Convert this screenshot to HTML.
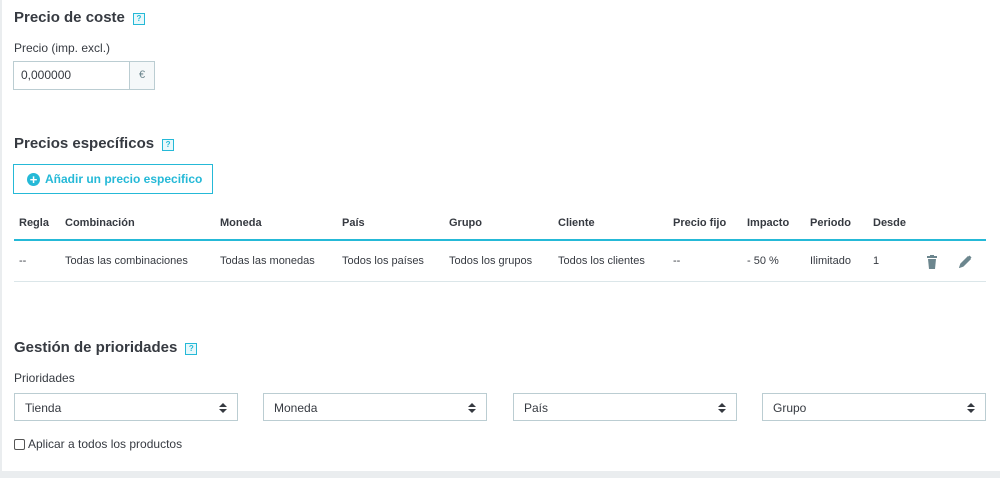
<!DOCTYPE html>
<html><head><style>
body{margin:0;width:1000px;height:478px;background:#fff;font-family:"Liberation Sans",sans-serif;color:#363a41;position:relative;overflow:hidden}
.a{position:absolute;white-space:nowrap}
h{position:absolute;font-size:15px;font-weight:bold;color:#363a41}
.q{display:inline-block;width:10px;height:10px;border:1.5px solid #25b9d7;font-size:8px;color:#25b9d7;text-align:center;line-height:10px;vertical-align:1px;margin-left:8px;background:#e8f8fb;font-weight:bold}
.l{font-size:12px;color:#363a41}
.th{position:absolute;top:217px;font-size:11px;font-weight:bold}
.td{position:absolute;top:255px;font-size:11px}
.sel{position:absolute;top:393px;width:224px;height:28px;border:1px solid #bbcdd2;font-size:12px;line-height:28px;box-sizing:border-box;padding-left:10px}
.sel:after{content:"";position:absolute;right:10px;top:9px;border-left:4px solid transparent;border-right:4px solid transparent;border-bottom:4px solid #363a41}
.sel:before{content:"";position:absolute;right:10px;top:15px;border-left:4px solid transparent;border-right:4px solid transparent;border-top:4px solid #363a41}
</style></head><body>
<div class="a" style="left:0;top:0;width:2px;height:478px;background:#eaedef"></div>
<div class="a" style="left:0;top:471px;width:1000px;height:7px;background:#eaedef"></div>
<h style="left:14px;top:9px">Precio de coste<span class="q">?</span></h>
<div class="a l" style="left:14px;top:41px">Precio (imp. excl.)</div>
<div class="a" style="left:13px;top:61px;width:142px;height:29px;border:1px solid #bbcdd2;box-sizing:border-box"></div>
<div class="a" style="left:129px;top:62px;width:24px;height:27px;background:#f5f8f9;border-left:1px solid #bbcdd2;font-size:11px;color:#6c868e;text-align:center;line-height:27px">€</div>
<div class="a l" style="left:21px;top:68px">0,000000</div>
<h style="left:14px;top:135px">Precios específicos<span class="q">?</span></h>
<div class="a" style="left:13px;top:164px;width:200px;height:30px;border:1px solid #25b9d7;box-sizing:border-box"></div>
<div class="a" style="left:27px;top:173px;width:13px;height:13px;border-radius:50%;background:#25b9d7;color:#fff;font-size:13px;font-weight:bold;line-height:13px;text-align:center">+</div>
<div class="a" style="left:45px;top:172px;font-size:12px;font-weight:bold;color:#25b9d7">Añadir un precio especifico</div>
<div class="th" style="left:19px">Regla</div><div class="th" style="left:65px">Combinación</div><div class="th" style="left:220px">Moneda</div><div class="th" style="left:342px">País</div><div class="th" style="left:449px">Grupo</div><div class="th" style="left:558px">Cliente</div><div class="th" style="left:673px">Precio fijo</div><div class="th" style="left:747px">Impacto</div><div class="th" style="left:810px">Periodo</div><div class="th" style="left:873px">Desde</div>
<div class="a" style="left:14px;top:239px;width:972px;height:2px;background:#25b9d7"></div>
<div class="td" style="left:19px">--</div><div class="td" style="left:65px">Todas las combinaciones</div><div class="td" style="left:220px">Todas las monedas</div><div class="td" style="left:342px">Todos los países</div><div class="td" style="left:449px">Todos los grupos</div><div class="td" style="left:558px">Todos los clientes</div><div class="td" style="left:673px">--</div><div class="td" style="left:747px">- 50 %</div><div class="td" style="left:810px">Ilimitado</div><div class="td" style="left:873px">1</div>
<svg class="a" style="left:926px;top:255px" width="12" height="14" viewBox="0 0 12 14"><rect x="1" y="1" width="10" height="2" fill="#6c868e"/><rect x="4" y="0" width="4" height="2" fill="#6c868e"/><path d="M2 4h8l-1 10H3z" fill="#6c868e"/></svg>
<svg class="a" style="left:959px;top:255px" width="13" height="13" viewBox="0 0 13 13"><path d="M1 12l1-3 7-7 2 2-7 7z M10 1l2 2" stroke="#6c868e" stroke-width="1.5" fill="#6c868e"/></svg>
<div class="a" style="left:14px;top:281px;width:972px;height:1px;background:#dbe6e9"></div>
<h style="left:14px;top:339px">Gestión de prioridades<span class="q">?</span></h>
<div class="a l" style="left:14px;top:371px">Prioridades</div>
<div class="sel" style="left:14px">Tienda</div><div class="sel" style="left:263px">Moneda</div><div class="sel" style="left:513px">País</div><div class="sel" style="left:762px">Grupo</div>
<div class="a" style="left:14px;top:439px;width:9px;height:9px;border:1px solid #555;border-radius:2px"></div>
<div class="a l" style="left:28px;top:437px">Aplicar a todos los productos</div>
</body></html>
